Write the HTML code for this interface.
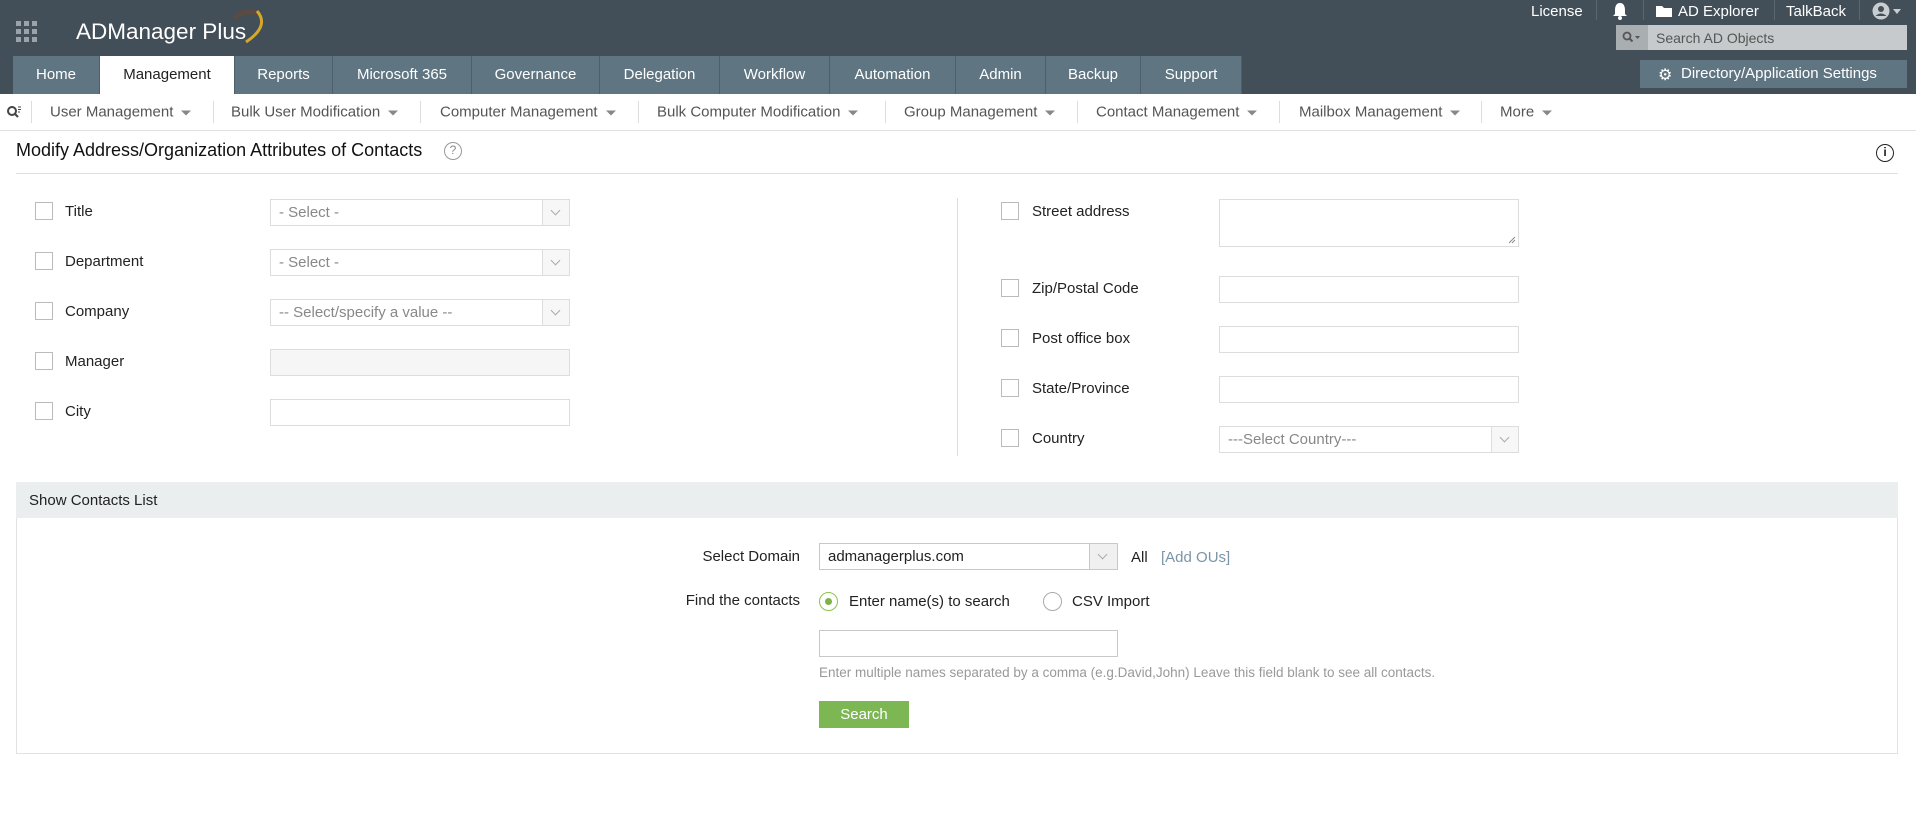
<!DOCTYPE html>
<html><head><meta charset="utf-8"><style>
*{margin:0;padding:0;box-sizing:border-box}
body{width:1916px;height:833px;background:#fff;font-family:"Liberation Sans",sans-serif;position:relative;overflow:hidden;color:#222}
.a{position:absolute;white-space:nowrap}
#hdr{position:absolute;left:0;top:0;width:1916px;height:94px;background:#424f59}
.tab{position:absolute;top:56px;height:38px;background:#5f7582;color:#fff;font-size:15px;line-height:38px;text-align:center;border-right:1px solid #4d5f6a}
.tab.on{background:#fff;color:#222}
.sub{position:absolute;top:112px;transform:translateY(-50%);font-size:15px;color:#555}
.caret{display:inline-block;width:0;height:0;border-left:5px solid transparent;border-right:5px solid transparent;border-top:5px solid #888;margin-left:8px;vertical-align:middle}
.sep{position:absolute;top:101px;width:1px;height:22px;background:#ddd}
.cb{position:absolute;width:18px;height:18px;border:1px solid #bbb;background:#fff}
.lbl{position:absolute;font-size:15px;color:#222}
.inp{position:absolute;height:27px;border:1px solid #ddd;background:#fff;font-size:15px;color:#888;line-height:25px;padding-left:8px}
.dd{position:absolute;right:0;top:0;width:27px;height:25px;border-left:1px solid #ddd;background:#f7f7f7}
.dd:after{content:"";position:absolute;left:9px;top:7px;width:6px;height:6px;border-right:1.5px solid #aaa;border-bottom:1.5px solid #aaa;transform:rotate(45deg)}
.hs{position:absolute;top:0;width:1px;height:20px;background:#5a6770}
</style></head><body>
<div id="hdr"></div>
<svg class="a" style="left:16px;top:21px" width="22" height="22"><g fill="#9aa3a9"><rect x="0" y="0" width="5" height="5"/><rect x="8" y="0" width="5" height="5"/><rect x="16" y="0" width="5" height="5"/><rect x="0" y="8" width="5" height="5"/><rect x="8" y="8" width="5" height="5"/><rect x="16" y="8" width="5" height="5"/><rect x="0" y="16" width="5" height="5"/><rect x="8" y="16" width="5" height="5"/><rect x="16" y="16" width="5" height="5"/></g></svg>
<div class="a" style="left:76px;top:19px;font-size:22.5px;color:#fff">ADManager Plus</div>
<svg class="a" style="left:228px;top:6px" width="45" height="40"><path d="M6 12 Q20 2 30 8" stroke="#5a4a42" stroke-width="5" fill="none"/><path d="M29 5 Q42 20 18 36" stroke="#d4a82a" stroke-width="3" fill="none"/></svg>
<div class="a" style="left:1531px;top:3px;font-size:15px;color:#fff">License</div>
<div class="hs" style="left:1596px"></div>
<svg class="a" style="left:1612px;top:2px" width="16" height="18"><path d="M8 1 C4 1 3 5 3 8 L3 12 L1 14 L15 14 L13 12 L13 8 C13 5 12 1 8 1Z" fill="#fff"/><circle cx="8" cy="16" r="2" fill="#fff"/></svg>
<div class="hs" style="left:1643px"></div>
<svg class="a" style="left:1656px;top:5px" width="16" height="12"><path d="M0 1 h6 l2 2 h8 v9 h-16z" fill="#fff"/></svg>
<div class="a" style="left:1678px;top:3px;font-size:15px;color:#fff">AD Explorer</div>
<div class="hs" style="left:1774px"></div>
<div class="a" style="left:1786px;top:3px;font-size:15px;color:#fff">TalkBack</div>
<div class="hs" style="left:1859px"></div>
<svg class="a" style="left:1872px;top:2px" width="30" height="18"><circle cx="9" cy="9" r="8.5" fill="#c9cdd0"/><circle cx="9" cy="7" r="3" fill="#424f59"/><path d="M3.5 14 Q9 9 14.5 14" fill="#424f59"/><path d="M21 7 h8 l-4 5z" fill="#c9cdd0"/></svg>
<div class="a" style="left:1616px;top:25px;width:291px;height:25px;background:#c6cacc"></div>
<div class="a" style="left:1616px;top:25px;width:32px;height:25px;background:#a9aeb1"></div>
<svg class="a" style="left:1622px;top:31px" width="20" height="14"><circle cx="5" cy="5" r="3.5" stroke="#555" stroke-width="1.8" fill="none"/><path d="M7.5 7.5 L10.5 10.5" stroke="#555" stroke-width="2"/><path d="M13 5 h5 l-2.5 3z" fill="#555"/></svg>
<div class="a" style="left:1656px;top:30px;font-size:14px;color:#555">Search AD Objects</div>
<div class="a" style="left:1640px;top:60px;width:267px;height:28px;background:#5f7582"></div>
<div class="a" style="left:1658px;top:65px;font-size:16px;color:#fff">&#9881;</div>
<div class="a" style="left:1681px;top:65px;font-size:15px;color:#fff">Directory/Application Settings</div>
<div class="tab" style="left:13px;width:87px">Home</div>
<div class="tab on" style="left:100px;width:135px">Management</div>
<div class="tab" style="left:235px;width:98px">Reports</div>
<div class="tab" style="left:333px;width:139px">Microsoft 365</div>
<div class="tab" style="left:472px;width:128px">Governance</div>
<div class="tab" style="left:600px;width:120px">Delegation</div>
<div class="tab" style="left:720px;width:110px">Workflow</div>
<div class="tab" style="left:830px;width:126px">Automation</div>
<div class="tab" style="left:956px;width:90px">Admin</div>
<div class="tab" style="left:1046px;width:95px">Backup</div>
<div class="tab" style="left:1141px;width:101px">Support</div>
<svg class="a" style="left:6px;top:105px" width="16" height="14"><circle cx="6" cy="6" r="4" stroke="#444" stroke-width="2" fill="none"/><path d="M9 9 L12 12" stroke="#444" stroke-width="2"/><path d="M12 2h3M12 4.5h3M12 7h2" stroke="#444" stroke-width="1"/></svg>
<div class="sep" style="left:31px"></div>
<div class="sub" style="left:50px">User Management<span class="caret"></span></div>
<div class="sep" style="left:213px"></div>
<div class="sub" style="left:231px">Bulk User Modification<span class="caret"></span></div>
<div class="sep" style="left:420px"></div>
<div class="sub" style="left:440px">Computer Management<span class="caret"></span></div>
<div class="sep" style="left:638px"></div>
<div class="sub" style="left:657px">Bulk Computer Modification<span class="caret"></span></div>
<div class="sep" style="left:885px"></div>
<div class="sub" style="left:904px">Group Management<span class="caret"></span></div>
<div class="sep" style="left:1077px"></div>
<div class="sub" style="left:1096px">Contact Management<span class="caret"></span></div>
<div class="sep" style="left:1279px"></div>
<div class="sub" style="left:1299px">Mailbox Management<span class="caret"></span></div>
<div class="sep" style="left:1481px"></div>
<div class="sub" style="left:1500px">More<span class="caret"></span></div>
<div class="a" style="left:0;top:130px;width:1916px;height:1px;background:#e2e2e2"></div>
<div class="a" style="left:16px;top:140px;font-size:18px;color:#111">Modify Address/Organization Attributes of Contacts</div>
<div class="a" style="left:444px;top:142px;width:18px;height:18px;border:1.5px solid #999;border-radius:50%;font-size:12px;color:#888;text-align:center;line-height:15px">?</div>
<div class="a" style="left:1876px;top:144px;width:18px;height:18px;border:1.5px solid #222;border-radius:50%;font-size:12px;font-weight:bold;color:#222;text-align:center;line-height:15px">i</div>
<div class="a" style="left:16px;top:173px;width:1882px;height:1px;background:#e0e0e0"></div>

<div class="cb" style="left:35px;top:202px"></div><div class="lbl" style="left:65px;top:203px">Title</div>
<div class="inp" style="left:270px;top:199px;width:300px">- Select -<div class="dd"></div></div>
<div class="cb" style="left:35px;top:252px"></div><div class="lbl" style="left:65px;top:253px">Department</div>
<div class="inp" style="left:270px;top:249px;width:300px">- Select -<div class="dd"></div></div>
<div class="cb" style="left:35px;top:302px"></div><div class="lbl" style="left:65px;top:303px">Company</div>
<div class="inp" style="left:270px;top:299px;width:300px">-- Select/specify a value --<div class="dd"></div></div>
<div class="cb" style="left:35px;top:352px"></div><div class="lbl" style="left:65px;top:353px">Manager</div>
<div class="inp" style="left:270px;top:349px;width:300px;background:#f6f6f6"></div>
<div class="cb" style="left:35px;top:402px"></div><div class="lbl" style="left:65px;top:403px">City</div>
<div class="inp" style="left:270px;top:399px;width:300px"></div>

<div class="a" style="left:957px;top:198px;width:1px;height:258px;background:#ddd"></div>
<div class="cb" style="left:1001px;top:202px"></div><div class="lbl" style="left:1032px;top:203px">Street address</div>
<div class="inp" style="left:1219px;top:199px;width:300px;height:48px"></div>
<svg class="a" style="left:1508px;top:236px" width="8" height="8"><path d="M1 7 L7 1 M4 7 L7 4" stroke="#888"/></svg>
<div class="cb" style="left:1001px;top:279px"></div><div class="lbl" style="left:1032px;top:280px">Zip/Postal Code</div>
<div class="inp" style="left:1219px;top:276px;width:300px"></div>
<div class="cb" style="left:1001px;top:329px"></div><div class="lbl" style="left:1032px;top:330px">Post office box</div>
<div class="inp" style="left:1219px;top:326px;width:300px"></div>
<div class="cb" style="left:1001px;top:379px"></div><div class="lbl" style="left:1032px;top:380px">State/Province</div>
<div class="inp" style="left:1219px;top:376px;width:300px"></div>
<div class="cb" style="left:1001px;top:429px"></div><div class="lbl" style="left:1032px;top:430px">Country</div>
<div class="inp" style="left:1219px;top:426px;width:300px">---Select Country---<div class="dd"></div></div>

<div class="a" style="left:16px;top:482px;width:1882px;height:272px;border:1px solid #e2e2e2"></div>
<div class="a" style="left:16px;top:482px;width:1882px;height:36px;background:#ebeeef"></div>
<div class="a" style="left:29px;top:492px;font-size:15px;color:#222">Show Contacts List</div>
<div class="a" style="left:600px;top:548px;width:200px;text-align:right;font-size:15px">Select Domain</div>
<div class="inp" style="left:819px;top:543px;width:299px;height:27px;border-color:#c8c8c8;color:#222">admanagerplus.com<div class="dd" style="width:28px;background:#f0f0f0;border-color:#c8c8c8"></div></div>
<div class="a" style="left:1131px;top:549px;font-size:15px">All</div>
<div class="a" style="left:1161px;top:549px;font-size:15px;color:#7a95a6">[Add OUs]</div>
<div class="a" style="left:600px;top:592px;width:200px;text-align:right;font-size:15px">Find the contacts</div>
<div class="a" style="left:819px;top:592px;width:19px;height:19px;border:1.5px solid #8bc34a;border-radius:50%"></div>
<div class="a" style="left:825px;top:598px;width:7px;height:7px;background:#7cb342;border-radius:50%"></div>
<div class="a" style="left:849px;top:593px;font-size:15px">Enter name(s) to search</div>
<div class="a" style="left:1043px;top:592px;width:19px;height:19px;border:1.5px solid #aaa;border-radius:50%"></div>
<div class="a" style="left:1072px;top:593px;font-size:15px">CSV Import</div>
<div class="inp" style="left:819px;top:630px;width:299px;border-color:#c8c8c8"></div>
<div class="a" style="left:819px;top:665px;font-size:13.5px;color:#999">Enter multiple names separated by a comma (e.g.David,John) Leave this field blank to see all contacts.</div>
<div class="a" style="left:819px;top:701px;width:90px;height:27px;background:#7cb753;color:#fff;font-size:15px;text-align:center;line-height:27px">Search</div>
</body></html>
